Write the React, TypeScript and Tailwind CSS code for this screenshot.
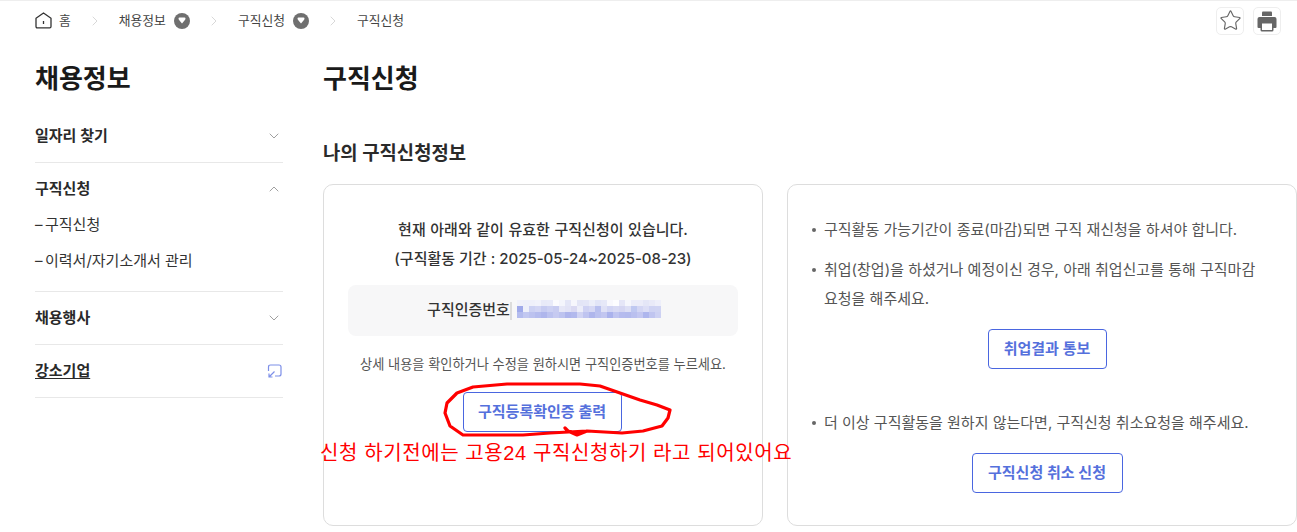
import { ChevronDown, ChevronRight, ChevronUp, Star } from "lucide-react";

const font = `font-['Inter','Noto_Sans_CJK_KR',sans-serif]`;

const mosaicRows = [
  ["#f0f1fa", "#eef0fa", "#eff0fa", "#f1f2fb", "#e8eaf8", "#e9ebf9", "#fbfbfe", "#f4f5fc", "#e4e6f7", "#f6f6fc", "#e3e5f6", "#e4e6f7", "#eceef9", "#e2e5f7", "#e6e8f8", "#f8f8fd", "#fdfdff", "#e5e6f7", "#f5f6fc", "#ebecf9", "#ebecf9", "#e4e6f7", "#e9eaf8", "#eeeffa"],
  ["#a0aaea", "#eef0fa", "#ccd1f3", "#d2d5f4", "#c6cbf1", "#cdd1f3", "#c8ccf1", "#e6e7f7", "#e2e3f6", "#dad9f2", "#ecedf9", "#cfd2f3", "#d6d8f4", "#b9c0ef", "#dfe1f6", "#d2d5f4", "#d8daf4", "#d5d6f2", "#dddff5", "#bfc8f1", "#d3d6f4", "#dcdef6", "#cfd3f3", "#d0d4f3"],
  ["#b4bcee", "#c2c8f1", "#bcc2ef", "#b5bcee", "#afb6ec", "#bcc2ef", "#c6caf1", "#bdc3ef", "#aeb5ec", "#b2b9ed", "#d0d3f3", "#bfc4f0", "#afb6ec", "#bbc1ef", "#c2c6f0", "#aab2ec", "#bfc4f0", "#b5bbee", "#b3baed", "#bac0ef", "#c3c7f1", "#aeb6ed", "#c0c5f0", "#cdd1f3"],
];

function Crumb({ label, dropdown }: { label: string; dropdown?: boolean }) {
  return (
    <>
      <ChevronRight size={16} strokeWidth={1} className="mx-[16px] text-[#c4c4c4]" />
      <span className="text-[12.8px] text-[#444]">{label}</span>
      {dropdown && (
        <span className="ml-[8px] flex h-[16px] w-[16px] items-center justify-center rounded-full bg-[#6f6f6f]">
          <svg width="8" height="7" viewBox="0 0 8 7">
            <path d="M0.5 1.5 Q0.5 0.5 1.5 0.5 H6.5 Q7.5 0.5 7.5 1.5 Q7.5 2.5 6.5 3.5 L4 6.5 L1.5 3.5 Q0.5 2.5 0.5 1.5Z" fill="#fff" />
          </svg>
        </span>
      )}
    </>
  );
}

function MenuHead({ label, open }: { label: string; open?: boolean }) {
  return (
    <div className="flex items-center justify-between pr-[1px]">
      <span className="text-[15px] font-semibold leading-[22px] text-[#2a2a2a]">{label}</span>
      {open ? (
        <ChevronUp size={16} strokeWidth={1.5} className="text-[#a0a0a0]" />
      ) : (
        <ChevronDown size={16} strokeWidth={1.5} className="text-[#a0a0a0]" />
      )}
    </div>
  );
}

function SubItem({ label }: { label: string }) {
  return (
    <li className="flex">
      <span className="w-[10px] shrink-0">–</span>
      {label}
    </li>
  );
}

function Bullet() {
  return <span className="mt-[13px] mr-[8px] h-[4px] w-[4px] shrink-0 rounded-full bg-[#666]" />;
}

function Action({ label, w }: { label: string; w: string }) {
  return (
    <button className={`flex h-[40px] items-center justify-center rounded-[4px] border border-[#4a66e0] bg-white text-[15px] font-semibold text-[#5570dc] ${w}`}>
      {label}
    </button>
  );
}

export default function App() {
  return (
    <div className={`relative h-[532px] w-[1297px] overflow-hidden border-t border-[#eeeeee] bg-white ${font}`}>
      <div className="flex h-[39px] items-center pl-[35px] pr-[16px]">
        <svg width="17" height="17" viewBox="0 0 17 17" fill="none" stroke="#333" strokeWidth="1.3">
          <path d="M1 6.2 L8.5 1 L16 6.2 V14.5 Q16 15.9 14.7 15.9 H2.3 Q1 15.9 1 14.5Z" strokeLinejoin="round" />
          <path d="M8.5 9 V12" />
        </svg>
        <span className="ml-[7px] text-[12.8px] text-[#444]">홈</span>
        <Crumb label="채용정보" dropdown />
        <Crumb label="구직신청" dropdown />
        <Crumb label="구직신청" />
        <div className="ml-auto flex gap-[9px]">
          <div className="flex h-[28px] w-[28px] items-center justify-center rounded-[5px] border border-[#eeeeee]">
            <Star size={23} strokeWidth={1.2} className="text-[#666]" />
          </div>
          <div className="flex h-[28px] w-[28px] items-center justify-center rounded-[5px] border border-[#eeeeee]">
            <svg width="22" height="22" viewBox="0 0 22 22">
              <path d="M6 6 V2.5 Q6 1.5 7 1.5 H15 Q16 1.5 16 2.5 V6Z" fill="#666" />
              <path d="M3.5 7 H18.5 Q20.5 7 20.5 9 V17 Q20.5 18 19.5 18 H2.5 Q1.5 18 1.5 17 V9 Q1.5 7 3.5 7Z" fill="#666" />
              <rect x="4.5" y="12" width="13" height="9.5" rx="1.5" fill="#666" />
              <rect x="6" y="13.5" width="10" height="6.5" fill="#fff" />
            </svg>
          </div>
        </div>
      </div>

      <div className="flex pl-[35px]">
        <aside className="mr-[40px] w-[248px] shrink-0">
          <h2 className="mt-[19px] text-[26px] font-semibold leading-[39px] text-[#1a1a1a]">채용정보</h2>
          <div className="mt-[10px] border-b border-[#e8e8e8] pt-[17px] pb-[15px]">
            <MenuHead label="일자리 찾기" />
          </div>
          <div className="border-b border-[#e8e8e8] pt-[15px] pb-[19px]">
            <MenuHead label="구직신청" open />
            <ul className="mt-[14px] flex flex-col gap-[14px] text-[15px] leading-[22px] text-[#333]">
              <SubItem label="구직신청" />
              <SubItem label="이력서/자기소개서 관리" />
            </ul>
          </div>
          <div className="border-b border-[#e8e8e8] pt-[15px] pb-[15px]">
            <MenuHead label="채용행사" />
          </div>
          <div className="flex items-center justify-between border-b border-[#e8e8e8] pt-[15px] pb-[15px] pr-[1px]">
            <span className="text-[15px] font-semibold leading-[22px] text-[#2a2a2a] underline underline-offset-2">강소기업</span>
            <svg width="15" height="15" viewBox="0 0 15 15" fill="none" stroke="#7d8fe8" strokeWidth="1.2">
              <path d="M1.5 7 V3 Q1.5 1 3.5 1 H12 Q14 1 14 3 V10 Q14 12 12 12 H8" />
              <path d="M7.5 7.5 L2 13 M2 9.5 V13 H5.5" />
            </svg>
          </div>
        </aside>

        <main className="w-[974px] shrink-0">
          <h1 className="mt-[19px] text-[26px] font-semibold leading-[39px] text-[#1a1a1a]">구직신청</h1>
          <h3 className="mt-[42px] text-[18.8px] font-semibold leading-[27px] text-[#2a2a2a]">나의 구직신청정보</h3>
          <div className="mt-[17px] flex gap-[24px]">
            <section className="flex h-[342px] w-[440px] shrink-0 flex-col items-center rounded-[10px] border border-[#dddddd] px-[24px] pt-[30px]">
              <p className="text-center text-[15px] font-medium leading-[29px] text-[#333]">
                <span className="[word-spacing:0.6px]">현재 아래와 같이 유효한 구직신청이 있습니다.</span>
                <br />
                (구직활동 기간 : 2025-05-24~2025-08-23)
              </p>
              <div className="mt-[12px] flex h-[51px] w-full items-center justify-center rounded-[8px] bg-[#f7f7f8]">
                <span className="text-[15px] font-medium text-[#333]">구직인증번호</span>
                <span className="h-[18px] w-[2px] bg-[#dcdcdc]" />
                <svg width="144" height="18" viewBox="0 0 144 18" className="mb-[3px] ml-[5px] mr-[-2px]" shapeRendering="crispEdges">
                  {mosaicRows.map((row, r) =>
                    row.map((c, i) => <rect key={`${r}-${i}`} x={i * 6} y={r * 6} width="6" height="6" fill={c} />)
                  )}
                </svg>
              </div>
              <p className="mt-[18px] text-[13.2px] leading-[20px] text-[#555]">
                상세 내용을 확인하거나 수정을 원하시면 구직인증번호를 누르세요.
              </p>
              <div className="mt-[18px] mr-[2px]">
                <Action label="구직등록확인증 출력" w="w-[159px]" />
              </div>
            </section>

            <section className="h-[342px] w-[510px] shrink-0 rounded-[10px] border border-[#dddddd] pl-[24px] pr-[14px] pt-[30px]">
              <ul className="text-[15px] leading-[29px] text-[#555]">
                <li className="flex">
                  <Bullet />
                  구직활동 가능기간이 종료(마감)되면 구직 재신청을 하셔야 합니다.
                </li>
                <li className="mt-[11px] flex">
                  <Bullet />
                  <span className="break-keep">취업(창업)을 하셨거나 예정이신 경우, 아래 취업신고를 통해 구직마감 요청을 해주세요.</span>
                </li>
              </ul>
              <div className="mt-[16px] flex justify-center">
                <Action label="취업결과 통보" w="w-[119px]" />
              </div>
              <ul className="mt-[39px] text-[15px] leading-[29px] text-[#555]">
                <li className="flex">
                  <Bullet />
                  더 이상 구직활동을 원하지 않는다면, 구직신청 취소요청을 해주세요.
                </li>
              </ul>
              <div className="mt-[16px] flex justify-center">
                <Action label="구직신청 취소 신청" w="w-[151px]" />
              </div>
            </section>
          </div>
        </main>
      </div>

      {/* annotation drawn over the page */}
      <svg width="1297" height="532" viewBox="0 0 1297 532" className="absolute left-0 top-[-1px]" fill="none" stroke="#ff0000" strokeWidth="3.2" strokeLinecap="round" strokeLinejoin="round">
        <path d="M565 428 L568 431 L577 435 L587 431 L622 433 L643 431 L662 426 L668 418 L670 410 L657 405 L640 400 L620 393 L600 386 L580 384 L507 384 L473 387 L457 393 L447 403 L445 413 L450 426 L463 435 L483 435 L523 435 L550 433 L587 431" />
      </svg>
      <span className="absolute left-[320px] top-[438px] whitespace-nowrap text-[20px] leading-[28px] text-[#ff0000] font-['Liberation_Sans','Noto_Sans_CJK_KR',sans-serif] tracking-[0.6px]">
        신청 하기전에는 고용24 구직신청하기 라고 되어있어요
      </span>
    </div>
  );
}
